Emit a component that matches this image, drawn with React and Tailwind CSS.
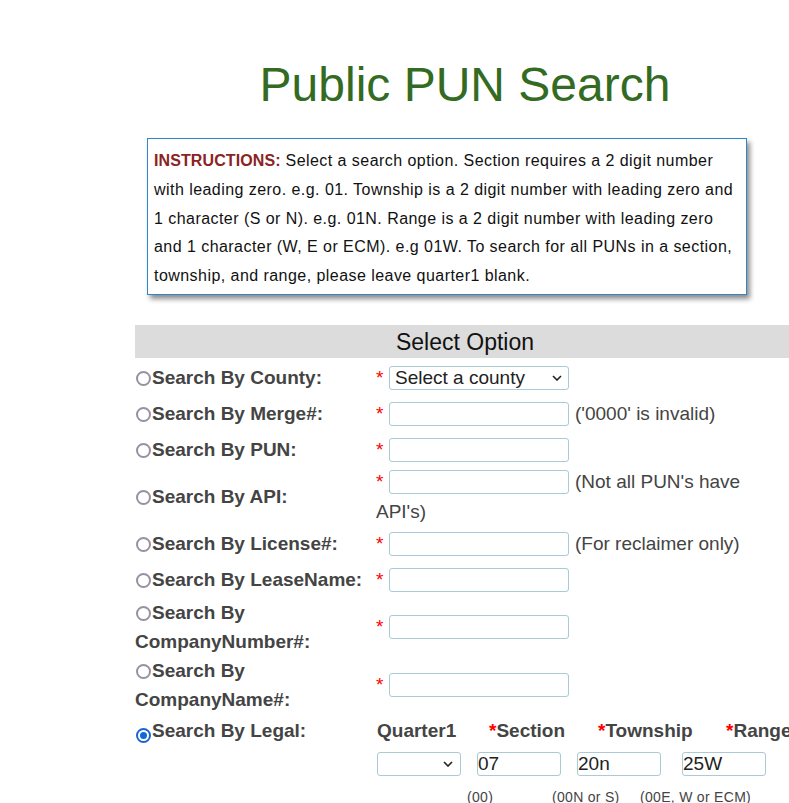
import React from 'react'

const labelCls = "text-[19px] leading-[29px] font-bold text-[#444]"

function Radio({ checked }) {
  if (checked) {
    return (
      <span className="inline-flex items-center justify-center w-[15px] h-[15px] rounded-full border-2 border-[#1766d6] align-[-2px] mx-[1px]">
        <span className="w-[7px] h-[7px] rounded-full bg-[#1766d6]" />
      </span>
    )
  }
  return <span className="inline-block w-[15px] h-[15px] rounded-full border-2 border-[#9593a3] align-[-2px] mx-[1px]" />
}

function TextBox({ value = '', className = 'w-[180px]' }) {
  return (
    <input
      type="text"
      defaultValue={value}
      className={`${className} h-[24px] border border-[#a9cad6] rounded-[3px] px-0 text-[19px] text-[#222] bg-white outline-none`}
    />
  )
}

function Dropdown({ text = '', className = 'w-[180px]', arrowCls = 'right-[7px]' }) {
  return (
    <div className={`relative ${className} h-[24px]`}>
      <select className="appearance-none w-full h-full border border-[#a9cad6] rounded-[3px] pl-[5px] text-[19px] leading-[22px] text-[#222] bg-white outline-none">
        <option>{text}</option>
      </select>
      <svg className={`absolute ${arrowCls} top-[9px] pointer-events-none`} width="10" height="6" viewBox="0 0 10 6">
        <path d="M1 1l4 4 4-4" fill="none" stroke="#222" strokeWidth="1.6" />
      </svg>
    </div>
  )
}

function Field({ hint, select }) {
  return (
    <div className="flex items-center text-[19px] leading-[22px] text-[#444]">
      <span className="w-[13px] text-[#f00]">*</span>
      {select ? <Dropdown text="Select a county" /> : <TextBox />}
      {hint && <span className="ml-[6px] whitespace-nowrap">{hint}</span>}
    </div>
  )
}

function Row({ h = 'h-[36px]', label, checked, children }) {
  return (
    <div className={`grid grid-cols-[241px_1fr] items-center ${h}`}>
      <div className={labelCls}>
        <Radio checked={checked} />
        {label}
      </div>
      {children}
    </div>
  )
}

export default function App() {
  return (
    <div className="w-screen h-screen overflow-hidden bg-white font-['Liberation_Sans',Arial,sans-serif]">
      <div className="ml-[135px] w-[660px]">
        <h1 className="pt-[57px] text-center text-[48px] leading-[56px] font-normal text-[#336b22]">
          Public PUN Search
        </h1>

        <div className="ml-[12px] mt-[25px] w-[600px] border border-[#2f86c8] shadow-[3px_4px_5px_rgba(0,0,0,0.45)] px-[6px] pt-[8px] pb-[3px] text-[16px] leading-[28.75px] text-[#111] whitespace-nowrap tracking-[0.45px]">
          <span className="font-bold text-[#8b2323] tracking-[0.1px]">INSTRUCTIONS:</span> Select a search option. Section requires a 2 digit number
          <br />
          with leading zero. e.g. 01. Township is a 2 digit number with leading zero and
          <br />
          1 character (S or N). e.g. 01N. Range is a 2 digit number with leading zero
          <br />
          and 1 character (W, E or ECM). e.g 01W. To search for all PUNs in a section,
          <br />
          township, and range, please leave quarter1 blank.
        </div>

        <div className="mt-[30px] h-[33px] bg-[#dcdcdc] text-center text-[23px] leading-[34px] text-[#111]">
          Select Option
        </div>

        <div className="mt-[2px]">
          <Row label="Search By County:">
            <Field select />
          </Row>
          <Row label="Search By Merge#:">
            <Field hint="('0000' is invalid)" />
          </Row>
          <Row label="Search By PUN:">
            <Field />
          </Row>
          <Row h="h-[58px]" label="Search By API:">
            <div className="self-start pt-[2px] text-[19px] text-[#444]">
              <Field hint="(Not all PUN's have" />
              <div className="mt-[4px] leading-[28px]">API's)</div>
            </div>
          </Row>
          <Row label="Search By License#:">
            <Field hint="(For reclaimer only)" />
          </Row>
          <Row label="Search By LeaseName:">
            <Field />
          </Row>
          <Row h="h-[58px]" label="Search By CompanyNumber#:">
            <Field />
          </Row>
          <Row h="h-[57px]" label="Search By CompanyName#:">
            <Field />
          </Row>

          <div className="grid grid-cols-[241px_1fr]">
            <div className="h-[36px] flex items-center">
              <div className={labelCls}>
                <Radio checked />
                Search By Legal:
              </div>
            </div>
            <div>
              <div className="h-[36px] grid grid-cols-[113px_109px_128px_1fr] items-center text-[19px] font-bold text-[#444] whitespace-nowrap">
                <span className="pl-[1px]">Quarter1</span>
                <span><span className="text-[#f00]">*</span>Section</span>
                <span><span className="text-[#f00]">*</span>Township</span>
                <span><span className="text-[#f00]">*</span>Range</span>
              </div>
              <div className="flex mt-[3px]">
                <div className="ml-[1px]">
                  <Dropdown className="w-[84px]" arrowCls="right-[8px]" />
                </div>
                <div className="ml-[16px]">
                  <TextBox value="07" className="w-[84px]" />
                </div>
                <div className="ml-[16px]">
                  <TextBox value="20n" className="w-[84px]" />
                </div>
                <div className="ml-[21px]">
                  <TextBox value="25W" className="w-[84px]" />
                </div>
              </div>
              <div className="mt-[12px] pl-[91px] grid grid-cols-[85px_88px_auto] text-[14px] leading-[16px] text-[#444] whitespace-nowrap tracking-[0.3px]">
                <span>(00)</span>
                <span>(00N or S)</span>
                <span>(00E, W or ECM)</span>
              </div>
            </div>
          </div>
        </div>
      </div>
    </div>
  )
}
